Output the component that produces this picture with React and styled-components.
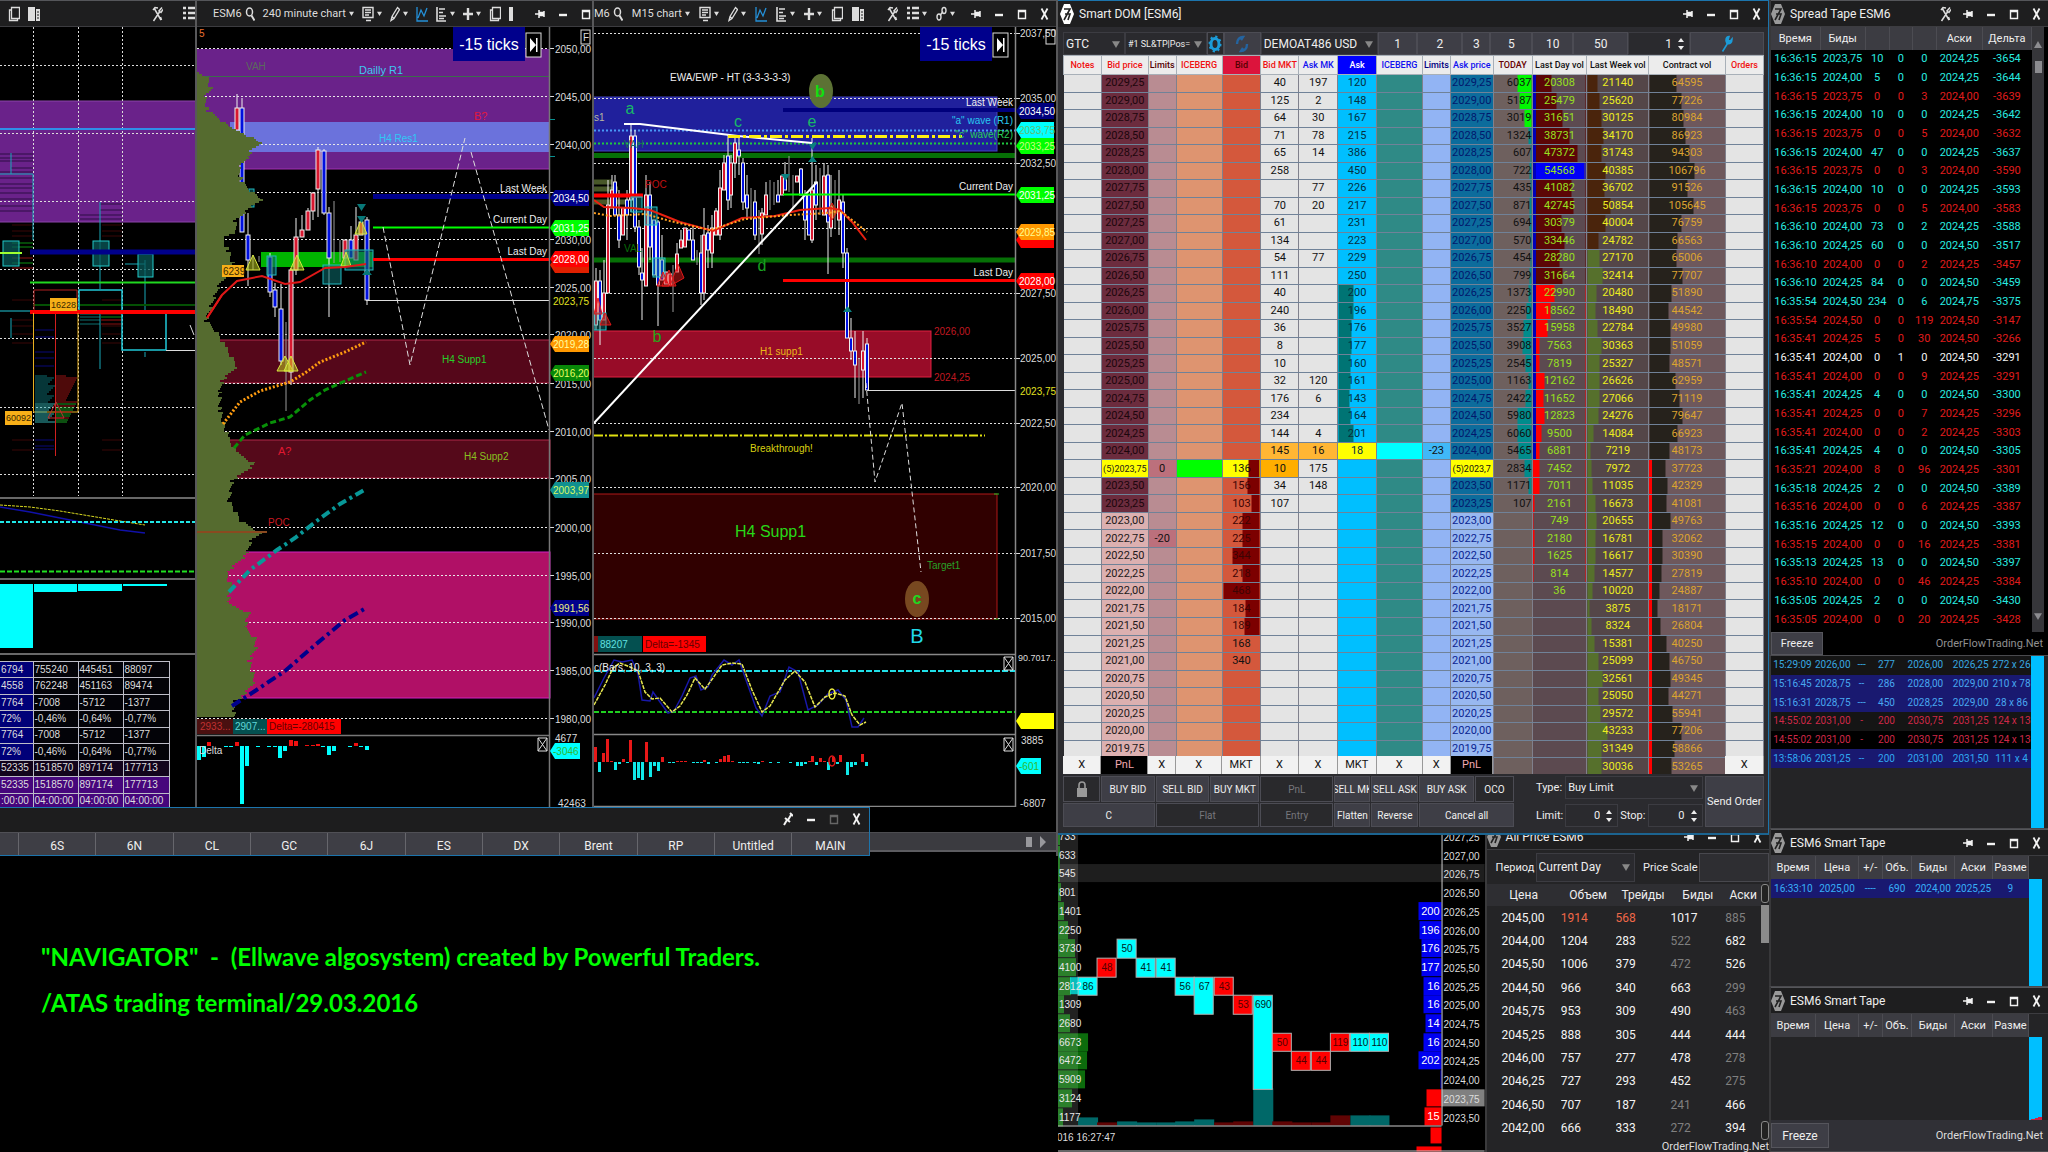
import { Fragment } from 'react';
import styled, { createGlobalStyle, css } from 'styled-components';

const GlobalStyle = createGlobalStyle`
  * {
    box-sizing: border-box;
  }
  body {
    margin: 0;
    background: #000;
    color: #eee;
    font-family: Roboto, "Liberation Sans", Arial, sans-serif;
    font-size: 11px;
  }
  button, input, select {
    font: inherit;
    color: inherit;
  }
  table {
    border-collapse: collapse;
    border-spacing: 0;
  }
  th, td {
    padding: 0;
    font-weight: normal;
    white-space: nowrap;
    overflow: hidden;
  }
`;

/* ---------- shell ---------- */

const Desktop = styled.div`
  display: grid;
  grid-template-columns: minmax(0, 1058fr) minmax(0, 711fr) minmax(0, 279fr);
  height: 100vh;
  overflow: hidden;
`;

const Column = styled.div`
  display: flex;
  flex-direction: column;
  min-width: 0;
  min-height: 0;
`;

const TitleBar = styled.header`
  display: flex;
  align-items: center;
  flex: none;
  height: 27px;
  gap: ${(p) => p.$gap || 5}px;
  padding-left: ${(p) => p.$pad || 0}px;
  background: #1e1e1f;
  border-top: 1px solid ${(p) => p.$line || '#55565a'};
  border-bottom: 1px solid #3c3c40;
  overflow: hidden;
  white-space: nowrap;
`;

const Title = styled.h2`
  margin: 0;
  font-size: 12px;
  font-weight: normal;
`;

const Spacer = styled.div`
  flex: 1;
`;

const WinButtons = styled.div`
  display: flex;
  flex: none;
`;

const WinButton = styled.button`
  display: flex;
  align-items: center;
  justify-content: center;
  width: 23px;
  height: 22px;
  padding: 0;
  border: 0;
  background: none;
  color: ${(p) => (p.$dim ? '#666' : '#f2f2f2')};
`;

const ToolButton = styled.button`
  display: flex;
  align-items: center;
  flex: none;
  gap: 3px;
  padding: 0;
  border: 0;
  background: none;
  color: ${(p) => p.$color || '#ddd'};
  font-size: 11px;
`;

const Divider = styled.span`
  width: 1px;
  height: 20px;
  background: #444;
`;

/* ---------- icons ---------- */

const ICONS = {
  pin: [10, 12, <path key="a" d="M0 6h4M4 2v8M4 6h4M4 4.500h4v3h-4M9 3v6" strokeWidth="1.500" />],
  pinUp: [10, 14, <path key="a" d="M1 13l3-5M2 6l5 4M5 8l3-5M7 1l3 3" strokeWidth="2" />],
  min: [12, 12, <path key="a" d="M2 7h8" strokeWidth="2.400" />],
  max: [12, 14, <path key="a" d="M2.500 3.500h7v8h-7zM2.500 4.500h7" strokeWidth="1.400" />],
  close: [10, 14, <path key="a" d="M1.500 1.500l6 11M7.500 1.500l-6 11" strokeWidth="1.800" />],
  search: [10, 16, <Fragment key="a"><ellipse cx="4.500" cy="6" rx="3" ry="4" strokeWidth="1.500" /><path d="M6.500 9.500l3 5" strokeWidth="2" /></Fragment>],
  monitor: [12, 16, <path key="a" d="M1 1.500h10v10h-10zM3 4h6M3 6.500h6M3 9h4M4 14.500h5" strokeWidth="1.400" />],
  pencil: [10, 16, <path key="a" d="M1 14.500l1-4 5.500-9 2 2-5.500 9zM2 10.500l2 2" strokeWidth="1.300" />],
  wave: [12, 16, <path key="a" d="M1 1v14h11M2 12l3-8 3 6 3-8" strokeWidth="1.300" />],
  levels: [11, 16, <path key="a" d="M1 1v14h9M3 3h6M3 6.500h4M3 10h7M3 12.500h5" strokeWidth="1.600" />],
  plus: [10, 14, <path key="a" d="M0 7h10M5 1v12" strokeWidth="2.400" />],
  copy: [12, 16, <path key="a" d="M3.500 1.500h8v11h-8zM3.500 4h-2v10.500h8v-2" strokeWidth="1.300" />],
  doc: [12, 16, <Fragment key="a"><path d="M0 1h7v14h-7zM8 3h4v12h-4z" fill="currentColor" stroke="none" /><path d="M9 6h2M9 9h2M9 12h2" stroke="#1e1e1f" /></Fragment>],
  docHalf: [4, 16, <path key="a" d="M0 1h4v14h-4z" fill="currentColor" stroke="none" />],
  tools: [11, 16, <path key="a" d="M2 2l7 12M1 4l2-2.500 3 .5M9.500 14l-1-3M10 1.500l-3 3.500 2 1.500 2-3M7.500 6l-6 9" strokeWidth="1.500" />],
  list: [12, 15, <path key="a" d="M0 2h3M5 2h7M0 7h3M5 7h7M0 12h3M5 12h7" strokeWidth="2.400" />],
  link: [11, 16, <Fragment key="a"><ellipse cx="8" cy="4.500" rx="2" ry="3" strokeWidth="1.400" /><ellipse cx="3" cy="11" rx="2" ry="3" strokeWidth="1.400" /><path d="M4 9.500l3-4" strokeWidth="1.400" /></Fragment>],
  gear: [14, 18, <Fragment key="a"><ellipse cx="7" cy="9" rx="4" ry="5.500" strokeWidth="3" /><ellipse cx="7" cy="9" rx="5.500" ry="7.500" strokeWidth="2" strokeDasharray="2.200 2.900" /></Fragment>],
  sync: [14, 18, <path key="a" d="M2 9c0-5 3-7 6-7l-2 3M12 9c0 5-3 7-6 7l2-3" strokeWidth="2.400" />],
  wrench: [12, 18, <path key="a" d="M1.500 16.500l5-8M11 4l-2 2.500-2-1.500 1-3.500c-3 0-4 4-2 7 3 1 5-1 5-4.500z" strokeWidth="1.600" fill="currentColor" />],
  lock: [12, 18, <Fragment key="a"><path d="M1 8h10v9h-10z" fill="currentColor" stroke="none" /><path d="M3 8v-3c0-4 6-4 6 0v3" strokeWidth="1.600" /></Fragment>],
};

function Icon({ name }) {
  const [w, h, shape] = ICONS[name];
  return (
    <svg width={w} height={h} viewBox={`0 0 ${w} ${h}`} fill="none" stroke="currentColor" aria-hidden="true">
      {shape}
    </svg>
  );
}

function Caret({ size = 5, color = '#ddd' }) {
  return (
    <svg width={size} height={size} viewBox="0 0 6 6" aria-hidden="true">
      <path d="M0 1h6l-3 5z" fill={color} />
    </svg>
  );
}

function Logo({ active }) {
  return (
    <svg width="14" height="20" viewBox="0 0 14 20" aria-hidden="true">
      <path d="M4 0h6l4 10-4 10h-6l-4-10z" fill={active ? '#fff' : '#9a9a9a'} />
      <path d="M4 5h6l-6 11M5 10h5l-2 6" fill="none" stroke="#222" strokeWidth="1.600" />
    </svg>
  );
}

function WindowControls({ pin = 'pin', dimMax }) {
  return (
    <WinButtons>
      <WinButton aria-label="Pin"><Icon name={pin} /></WinButton>
      <WinButton aria-label="Minimize"><Icon name="min" /></WinButton>
      <WinButton aria-label="Maximize" $dim={dimMax}><Icon name="max" /></WinButton>
      <WinButton aria-label="Close"><Icon name="close" /></WinButton>
    </WinButtons>
  );
}

/* ---------- chart primitives ---------- */

const Charts = styled.section`
  display: grid;
  grid-template-columns: minmax(0, 197fr) minmax(0, 397fr) minmax(0, 464fr);
  flex: none;
  height: 807px;
  overflow: hidden;
`;

const ChartWindow = styled.article`
  display: flex;
  flex-direction: column;
  min-width: 0;
  border-right: 2px solid #58585a;
  overflow: hidden;
`;

const Plot = styled.svg`
  display: block;
  flex: none;
  width: 100%;
  height: ${(p) => p.$h}px;
  font-family: "Liberation Sans", Arial, sans-serif;
  background: #000;
`;

const Label = styled.text`
  font-size: ${(p) => p.$size || 10}px;
  font-weight: ${(p) => (p.$bold ? 'bold' : 'normal')};
`;

const DOTS = '2 2';

function Candles({ data, w = 4 }) {
  return data.map(([x, kind, top, bottom, hi, lo], i) => {
    const fill = kind === 'r' ? '#d81830' : kind === 'b' ? '#0010e0' : 'none';
    return (
      <g key={i}>
        <path d={`M${x} ${hi ?? top}V${lo ?? bottom}`} stroke={kind === 'w' ? '#999' : '#eee'} />
        {kind !== 'w' && (
          <rect x={x - w / 2} y={top} width={w} height={bottom - top} fill={fill} stroke="#eee" strokeWidth="1" />
        )}
      </g>
    );
  });
}

function Tag({ x, y, w, fill, color = '#fff', children }) {
  return (
    <g>
      <path d={`M${x} ${y}l5 -8h${w - 5}v16h-${w - 5}z`} fill={fill} />
      <Label x={x + 3} y={y + 4} fill={color}>{children}</Label>
    </g>
  );
}

function Line({ pts, ...rest }) {
  return <polyline points={pts} fill="none" {...rest} />;
}

function CrossBox({ x, y }) {
  return <path d={`M${x} ${y}h9v13h-9zM${x} ${y}l9 13M${x + 9} ${y}l-9 13`} fill="none" stroke="#ddd" />;
}

function TicksBadge({ x }) {
  return (
    <g>
      <rect x={x} y="27" width="72" height="34" fill="#00008c" />
      <Label x={x + 36} y="50" textAnchor="middle" fill="#fff" $size={16}>-15 ticks</Label>
      <rect x={x + 73} y="33" width="15" height="24" fill="#000" stroke="#ddd" />
      <path d={`M${x + 77} 38v14l6 -7zM${x + 83} 38h1.500v14h-1.500z`} fill="#fff" />
    </g>
  );
}

/* ---------- footprint chart ---------- */

const PROFILE_A = Array.from({ length: 24 }, (_, i) => ({
  y: 376 + i * 2,
  l: 12 + ((i * 7) % 9),
  r: 10 + ((i * 11) % 12),
}));

const StatsTable = styled.table`
  width: 169px;
  height: 148px;
  flex: none;
  margin-top: 6px;
  table-layout: fixed;
  font-family: "Liberation Sans", Arial, sans-serif;
  font-size: 10px;
  line-height: 14px;
  td {
    border: 1px solid #bdbdc8;
    padding: 0 1px;
    background: #030308;
    color: #ddd;
  }
  td:first-child {
    background: #000078;
    border-left: 0;
  }
  tr:nth-child(7) td {
    background: #12041c;
  }
  tr:nth-child(n + 8) td {
    background: #46067c;
    border-bottom: 0;
  }
`;

const STATS = [
  ['6794', '755240', '445451', '88097'],
  ['4558', '762248', '451163', '89474'],
  ['7764', '-7008', '-5712', '-1377'],
  ['72%', '-0,46%', '-0,64%', '-0,77%'],
  ['7764', '-7008', '-5712', '-1377'],
  ['72%', '-0,46%', '-0,64%', '-0,77%'],
  ['52335', '1518570', '897174', '177713'],
  ['52335', '1518570', '897174', '177713'],
  [':00:00', '04:00:00', '04:00:00', '04:00:00'],
];

function ClusterChart() {
  return (
    <ChartWindow>
      <TitleBar $pad={8} $gap={8}>
        <ToolButton aria-label="Copy"><Icon name="copy" /></ToolButton>
        <ToolButton aria-label="Panel"><Icon name="doc" /></ToolButton>
        <Spacer />
        <ToolButton aria-label="Tools"><Icon name="tools" /></ToolButton>
        <Spacer style={{ flex: '0 0 4px' }} />
        <ToolButton aria-label="List"><Icon name="list" /></ToolButton>
      </TitleBar>
      <Plot $h={628} viewBox="0 27 195 628" preserveAspectRatio="xMinYMin slice">
        <rect x="-1" y="101" width="200" height="121" fill="#6a228a" stroke="#8a45a8" />
        {[65, 133, 201, 269, 338, 407, 474].map((y) => (
          <path key={y} d={`M0 ${y}.5H195`} stroke="#ddd" strokeDasharray={DOTS} />
        ))}
        {[33, 78, 122].map((x) => (
          <path key={x} d={`M${x}.5 27V496`} stroke="#ddd" strokeDasharray={DOTS} />
        ))}
        {[154, 158, 161, 168, 172, 178, 184, 188, 193, 199, 206, 211].map((y) => (
          <path key={y} d={`M${y % 3 ? 0 : 11} ${y}H33`} stroke="#2c0c44" />
        ))}
        {[204, 210, 215, 219].map((y) => (
          <path key={y} d={`M${y % 2 ? 80 : 100} ${y}H122`} stroke="#2c0c44" />
        ))}
        {[225, 231, 236, 300, 320, 326, 334, 343, 440, 450].map((y) => (
          <path key={y} d={`M102 ${y}H122M12 ${y}H33`} stroke="#3a0606" />
        ))}
        {[330, 337, 352, 358, 366, 440, 446, 449].map((y) => (
          <path key={y} d={`M35 ${y}H54`} stroke="#04043c" strokeWidth="2" />
        ))}
        {[243, 247, 258, 263, 268].map((y) => (
          <path key={y} d={`M12 ${y}H33`} stroke={y % 2 ? '#0a9010' : '#8c1010'} />
        ))}
        {[314, 317, 320, 324].map((y) => (
          <g key={y}>
            <path d={`M80 ${y}H100`} stroke="#0c7070" />
            <path d={`M101 ${y}H122`} stroke={y % 2 ? '#0a9010' : '#8c1010'} />
          </g>
        ))}
        <path d="M0 129H195" stroke="#2f8fe8" strokeWidth="2" />
        <path d="M11 153V174M0 174H33M33 174V240M11 318V338M100 202V289M100 310V369M145 260V311M125 264H145M145 352V357" stroke="#18a8b8" fill="none" />
        <g fill="#0a5a5a" stroke="#20c8c8" fillOpacity=".75">
          <rect x="3" y="241" width="16" height="25" />
          <rect x="93" y="241" width="16" height="25" />
          <rect x="138" y="254" width="15" height="23" />
        </g>
        <path d="M0 253H22" stroke="#a0ff30" strokeWidth="2" />
        <path d="M30 252H195" stroke="#00008c" strokeWidth="5" />
        <path d="M30 282.500H195" stroke="#20d820" strokeWidth="2" />
        <path d="M33 305H195" stroke="#045004" strokeWidth="2" />
        <path d="M34 290H77V311M34 290V312" stroke="#b02020" fill="none" />
        <path d="M79 310V290H122V350H166V313" stroke="#20c8d8" fill="none" strokeWidth="1.500" />
        <path d="M0 311H30" stroke="#20c8d8" />
        <path d="M30 312H195" stroke="#f00" strokeWidth="4" />
        <path d="M166 350.500H195" stroke="#ddd" />
        <path d="M33.500 313V412H78V313" stroke="#e8b020" fill="none" />
        {PROFILE_A.map((b, i) => (
          <g key={b.y}>
            <path d={`M35 ${b.y}h${b.l}`} stroke={i > 13 ? '#30b0b0' : '#0c6c70'} />
            <path d={`M56 ${b.y}h${b.r}`} stroke={i > 13 && i % 3 ? '#18a020' : '#9c1414'} />
          </g>
        ))}
        <path d="M55.500 314V456" stroke="#d02020" />
        <path d="M48 418l8-16 8 16z" fill="none" stroke="#c03030" />
        <rect x="50" y="298" width="27" height="13" fill="#f8b018" />
        <Label x="51" y="308" fill="#3a2800" $size={9}>16228</Label>
        <rect x="5" y="411" width="27" height="14" fill="#f8b018" />
        <Label x="6" y="421" fill="#3a2800" $size={9}>60092</Label>
        <path d="M190 325l4 10" stroke="#ddd" />
        <path d="M0 498H195M0 579H195M0 654H195" stroke="#8a8a8a" strokeWidth="1.500" />
        <Line pts="0,505 30,507 60,511 90,516 120,521 145,525" stroke="#d8d820" strokeDasharray="3 1" />
        <Line pts="0,507 30,512 60,518 90,524 120,530 145,533" stroke="#1010a8" strokeWidth="1.500" />
        <path d="M0 522H195" stroke="#20e8e8" strokeWidth="2" strokeDasharray="4 2" />
        <path d="M0 571.500H195" stroke="#20e020" strokeWidth="2" strokeDasharray="5 2" />
        <g fill="#0ff">
          <rect x="0" y="584" width="33" height="64" />
          <rect x="34" y="584" width="43" height="8" />
          <rect x="78" y="584" width="44" height="7" />
          <rect x="123" y="584" width="44" height="2" />
        </g>
      </Plot>
      <StatsTable>
        <colgroup>
          <col width="33" />
          <col width="45" />
          <col width="45" />
          <col width="46" />
        </colgroup>
        <tbody>
          {STATS.map((row, i) => (
            <tr key={i}>
              {row.map((v, j) => <td key={j}>{v}</td>)}
            </tr>
          ))}
        </tbody>
      </StatsTable>
    </ChartWindow>
  );
}

/* ---------- H4 chart ---------- */

const PROFILE_B = [
  [72, 197], [77, 207], [87, 211], [97, 205], [110, 208], [118, 220], [127, 230], [133, 245], [142, 260],
  [150, 251], [157, 247], [167, 239], [180, 241], [190, 251], [199, 262], [208, 249], [220, 235], [230, 237],
  [237, 222], [250, 228], [263, 233], [283, 220], [297, 214], [320, 206], [330, 216], [347, 226], [365, 237],
  [380, 222], [393, 220], [410, 220], [437, 228], [452, 237], [463, 255], [475, 239], [480, 232], [500, 229],
  [520, 241], [532, 260], [540, 251], [553, 247], [572, 226], [587, 232], [602, 227], [612, 249], [627, 245],
  [637, 255], [647, 256], [660, 249], [680, 255], [695, 243], [700, 235], [717, 234],
];

// stepped silhouette of the volume profile, one level every two pixels
function profilePath(points) {
  let d = `M197 ${points[0][0]}`;
  for (let i = 0; i < points.length - 1; i++) {
    const [y0, x0] = points[i];
    const [y1, x1] = points[i + 1];
    for (let y = y0; y < y1; y += 2) {
      const t = (y - y0) / (y1 - y0);
      const jag = ((y * 7) % 5) - 2;
      d += `H${Math.max(198, Math.round(x0 + (x1 - x0) * t + jag))}V${Math.min(y + 2, y1)}`;
    }
  }
  return `${d}H197Z`;
}

const CANDLES_B = [
  [237, 'r', 108, 130, 94], [242, 'b', 108, 134, 98], [242, 'b', 159, 232], [248, 'b', 235, 260, 213, 286],
  [253, 'w', 255, 270], [259, 'w', 256, 262], [270, 'b', 257, 292, 253, 297], [275, 'b', 290, 307, 283, 317],
  [281, 'b', 309, 361, 284, 365], [286, 'w', 322, 411], [291, 'r', 270, 372, 268, 385], [296, 'r', 237, 270, 218, 275],
  [302, 'r', 230, 237, 215], [308, 'r', 211, 230, 208], [313, 'r', 193, 211, 192, 220], [318, 'r', 150, 189, 147, 217],
  [324, 'b', 151, 213, 149, 215], [329, 'b', 213, 258, 207, 317], [334, 'w', 201, 263], [340, 'w', 240, 262],
  [345, 'r', 240, 258], [351, 'b', 240, 258, 226], [356, 'r', 235, 260, 207], [361, 'r', 222, 235], [367, 'b', 220, 300, 217, 305],
];

// the 2035 level is a grid line only, its label gives way to the 2034,50 tag
const PRICES_B = [
  ['2050,00', 48], ['2045,00', 96], ['2040,00', 144], ['', 192], ['2030,00', 239], ['2025,00', 287], ['2020,00', 334],
  ['2015,00', 383], ['2010,00', 431], ['2005,00', 478], ['2000,00', 527], ['1995,00', 575], ['1990,00', 622],
  ['1985,00', 670], ['1980,00', 718],
];

const DELTA_B = [
  [197, 14], [202, 11], [207, -4], [224, 1], [229, 1], [235, -4], [240, 58], [245, 20], [256, 1], [267, 1], [273, 1],
  [278, 12], [283, 5], [289, -6], [294, -5], [305, -1], [311, -1], [316, -2], [321, 1], [327, 9], [332, 5], [348, 1],
  [354, -3], [359, 1], [365, 4],
];

function HourChart() {
  return (
    <ChartWindow>
      <TitleBar $gap={8}>
        <Logo />
        <Divider />
        <ToolButton>ESM6 <Icon name="search" /></ToolButton>
        <ToolButton>240 minute chart<Caret /></ToolButton>
        <ToolButton aria-label="Template"><Icon name="monitor" /><Caret /></ToolButton>
        <ToolButton aria-label="Draw"><Icon name="pencil" /><Caret /></ToolButton>
        <ToolButton aria-label="Indicators" $color="#2490d8"><Icon name="wave" /></ToolButton>
        <ToolButton aria-label="Levels"><Icon name="levels" /><Caret /></ToolButton>
        <ToolButton aria-label="Add"><Icon name="plus" /><Caret /></ToolButton>
        <ToolButton aria-label="Copy"><Icon name="copy" /></ToolButton>
        <ToolButton aria-label="Panel"><Icon name="docHalf" /></ToolButton>
        <Spacer />
        <WindowControls />
      </TitleBar>
      <Plot $h={780} viewBox="197 27 395 780" preserveAspectRatio="xMinYMin slice">
        <rect x="197" y="49" width="352" height="120" fill="#6a228a" />
        <rect x="230" y="122" width="319" height="30" fill="#6b72dc" />
        <rect x="210" y="340" width="340" height="43" fill="#55071a" stroke="#b02848" />
        <rect x="210" y="440" width="340" height="38" fill="#55091a" stroke="#b02848" />
        <rect x="210" y="552" width="340" height="146" fill="#b01066" stroke="#d020c0" />
        <path d="M197 76.500H549" stroke="#3c6c4c" />
        <path d="M197 169H549" stroke="#a030b0" />
        {PRICES_B.map(([p, y]) => (
          <g key={y}>
            <path d={`M197 ${y}.5H549`} stroke="#e8e8e8" strokeDasharray={DOTS} />
            <path d={`M549 ${y}.5h5`} stroke="#ddd" />
            {p && <Label x="555" y={y + 5} fill="#ddd">{p}</Label>}
          </g>
        ))}
        <rect x="261" y="252" width="112" height="15" fill="#00b400" />
        <Candles data={CANDLES_B} />
        <g fill="#0a6868" fillOpacity=".6" stroke="#20b8c0">
          <rect x="267" y="256" width="9" height="19" />
          <rect x="323" y="265" width="18" height="19" />
          <rect x="345" y="250" width="28" height="20" />
          <rect x="249" y="189" width="5" height="18" />
        </g>
        <g fill="#c8d820" fillOpacity=".5" stroke="#d8e840">
          <path d="M246 270l7-15 7 15z" />
          <path d="M290 270l7-15 7 15z" />
          <path d="M277 371l8-15 8 15z" />
          <path d="M284 371l7-15 7 15z" />
          <path d="M355 234l6-14 6 14z" />
          <path d="M341 266l5-14 5 14z" />
        </g>
        <path d="M357 204h9l-4.500 7zM357 216h9l-4.500 7zM362 275l5-6 5 6z" fill="#087878" />
        <Line pts="207,318 222,295 237,281 262,276 285,284 300,282 325,268 345,267 366,264" stroke="#e01818" strokeWidth="2" />
        <path d={profilePath(PROFILE_B)} fill="#556b2f" />
        <path d="M207 318l15 -23" stroke="#e01818" strokeWidth="2" />
        <rect x="222" y="265" width="22" height="12" fill="#f8b018" />
        <Label x="223" y="275" fill="#3a2800">6239</Label>
        <path d="M197 532H267" stroke="#8a4a20" strokeWidth="2" />
        <Line pts="223,424 240,402 260,391 290,382 305,373 320,362 345,352 366,342" stroke="#ff9c10" strokeWidth="3" strokeDasharray="2 2" />
        <Line pts="234,448 245,435 270,423 290,417 310,400 325,390 345,381 366,372" stroke="#089008" strokeWidth="3" strokeDasharray="6 3" />
        <Line pts="229,592 250,570 277,550 295,538 318,520 340,504 366,489" stroke="#089898" strokeWidth="4" strokeDasharray="9 4 3 4" />
        <Line pts="232,706 255,691 285,671 315,645 345,620 366,608" stroke="#00008c" strokeWidth="4" strokeDasharray="10 4 3 4" />
        <path d="M373 196.500H549" stroke="#00008c" strokeWidth="5" />
        <path d="M373 227.500H549" stroke="#0f0" strokeWidth="2" />
        <path d="M373 259.500H549" stroke="#f00" strokeWidth="3" />
        <path d="M366 300.500H549" stroke="#ddd" />
        <Line pts="383,227 410,365 465,138" stroke="#ddd" strokeDasharray="6 3" />
        <Line pts="471,152 510,290 549,430" stroke="#ddd" strokeDasharray="6 3" />
        <rect x="196" y="719" width="37" height="15" fill="#4a1010" />
        <rect x="233" y="719" width="34" height="15" fill="#045050" />
        <rect x="267" y="719" width="74" height="15" fill="#f00" />
        <Label x="200" y="730" fill="#c03030">2933...</Label>
        <Label x="235" y="730" fill="#60d8d8">2907...</Label>
        <Label x="269" y="730" fill="#600">Delta=-280415</Label>
        <path d="M549.500 27V807M197 735.500H549" stroke="#777" strokeWidth="1.500" />
        {DELTA_B.map(([x, h]) => (
          <rect key={x} x={x} y={h > 0 ? 746 : 746 + h} width="4" height={Math.abs(h)} fill={h > 0 ? '#0ff' : '#f01010'} />
        ))}
        <Label x="199" y="754" fill="#ddd">Delta</Label>
        <CrossBox x={538} y={738} />
        <Label x="199" y="37" fill="#e87030">5</Label>
        <Label x="246" y="70" fill="#5a6a5c">VAH</Label>
        <Label x="359" y="74" fill="#40c8f0" $size={11}>Dailly R1</Label>
        <Label x="379" y="142" fill="#30c8f4">H4 Res1</Label>
        <Label x="474" y="120" fill="#e01840" $size={11}>B?</Label>
        <Label x="547" y="192" fill="#eee" textAnchor="end">Last Week</Label>
        <Label x="547" y="223" fill="#eee" textAnchor="end">Current Day</Label>
        <Label x="547" y="255" fill="#eee" textAnchor="end">Last Day</Label>
        <Label x="442" y="363" fill="#28d028">H4 Supp1</Label>
        <Label x="464" y="460" fill="#88c020">H4 Supp2</Label>
        <Label x="278" y="455" fill="#e01830" $size={11}>A?</Label>
        <Label x="268" y="526" fill="#c81820">POC</Label>
        <TicksBadge x={453} />
        <rect x="581" y="30" width="9" height="14" fill="#000" stroke="#ddd" />
        <Label x="583" y="41" fill="#ddd">F</Label>
        <path d="M550 119.500h5M550 156.500h5" stroke="#0a9090" />
        <Tag x={550} y={198} w={39} fill="#00008c">2034,50</Tag>
        <Tag x={550} y={228} w={39} fill="#0f0">2031,25</Tag>
        <path d="M550 265l5-8h34v16h-34z" fill="#e02000" />
        <Tag x={550} y={259} w={39} fill="#f00">2028,00</Tag>
        <Label x="553" y="305" fill="#e0e020">2023,75</Label>
        <Tag x={550} y={344} w={39} fill="#ff9800" color="#ffffa0">2019,28</Tag>
        <Tag x={550} y={373} w={39} fill="#088808" color="#e8ff60">2016,20</Tag>
        <Tag x={550} y={490} w={39} fill="#109090" color="#d8f860">2003,97</Tag>
        <Tag x={550} y={608} w={39} fill="#00008c" color="#f0f080">1991,56</Tag>
        <Label x="555" y="742" fill="#ddd">4677</Label>
        <Tag x={550} y={751} w={30} fill="#0ff" color="#30b830">-3046</Tag>
        <Label x="558" y="807" fill="#ddd">42463</Label>
      </Plot>
    </ChartWindow>
  );
}

/* ---------- M15 chart ---------- */

const CANDLES_C = [
  [596, 'r', 281, 325, 268, 330], [600, 'b', 281, 320, 270, 345], [604, 'r', 293, 320, 260], [608, 'r', 205, 293, 180],
  [612, 'r', 190, 208, 175], [615, 'b', 182, 215, 175], [619, 'b', 215, 240, 190, 248], [623, 'r', 208, 235],
  [627, 'b', 200, 215, 190, 240], [631, 'r', 136, 200, 125, 212], [635, 'b', 136, 227, 130, 232], [639, 'b', 227, 267, 220, 275],
  [642, 'b', 273, 280, 248, 320], [646, 'r', 195, 286, 175], [650, 'b', 195, 247, 182, 260], [654, 'b', 220, 275],
  [658, 'b', 222, 285, 220, 326], [662, 'b', 260, 280, 235], [666, 'r', 272, 284], [670, 'r', 274, 285], [673, 'w', 265, 312],
  [677, 'r', 254, 272, 243], [681, 'r', 240, 248, 230], [685, 'r', 228, 247], [689, 'b', 230, 240], [693, 'b', 240, 260, 225],
  [697, 'w', 250, 265], [701, 'b', 253, 293, 235, 305], [704, 'r', 235, 293, 208, 300], [708, 'b', 233, 250, 225, 268],
  [712, 'r', 228, 253, 215, 268], [716, 'r', 211, 235, 208], [720, 'r', 188, 235, 170, 240], [724, 'r', 163, 190, 155],
  [728, 'b', 156, 200, 135, 210], [731, 'r', 163, 195, 155, 208], [735, 'r', 143, 163, 138, 178], [739, 'b', 150, 156, 136, 175],
  [743, 'b', 163, 202, 158, 210], [747, 'b', 195, 208, 175, 220], [751, 'w', 188, 220], [755, 'b', 202, 235, 190, 240],
  [759, 'w', 210, 254], [762, 'r', 213, 234, 208, 245], [766, 'r', 195, 215, 182], [770, 'w', 180, 210], [774, 'w', 182, 205],
  [778, 'b', 195, 202, 180], [782, 'r', 176, 195], [785, 'b', 176, 190, 162], [789, 'w', 156, 192], [793, 'w', 175, 208],
  [797, 'r', 176, 182], [801, 'b', 169, 195, 168], [805, 'b', 195, 220, 190, 240], [809, 'b', 195, 235], [812, 'r', 190, 240, 138, 243],
  [816, 'b', 182, 205, 165, 220], [820, 'w', 168, 215], [824, 'r', 176, 215, 163], [828, 'b', 175, 222, 165, 274],
  [831, 'r', 207, 228, 175, 237], [835, 'w', 180, 228], [839, 'r', 200, 220, 170, 235], [843, 'b', 202, 253, 195, 268],
  [847, 'b', 253, 338, 248], [851, 'b', 338, 351, 318, 360], [855, 'b', 351, 365, 331, 398], [859, 'w', 358, 404],
  [863, 'r', 351, 370, 331, 398], [867, 'b', 344, 390, 338],
];

// 2030 carries no label of its own, the 2029,85 tag covers its place
const PRICES_C = [
  ['2037,50', 33], ['2035,00', 98], ['2032,50', 163], ['', 228], ['2027,50', 293], ['2025,00', 358],
  ['2022,50', 423], ['2020,00', 487], ['2017,50', 553], ['2015,00', 618],
];

const DELTA_C = [
  [594, -15], [598, 10], [602, -9], [606, -23], [610, -1], [614, 8], [618, 2], [622, -3], [626, 1], [629, -22], [633, 18],
  [637, 16], [641, 18], [645, -20], [649, 15], [653, 4], [657, 9], [661, -5], [668, 1], [672, 1], [676, -1], [680, -1],
  [684, -1], [692, 1], [696, 1], [700, 1], [703, -2], [707, 2], [715, 1], [719, -3], [723, -6], [727, -7], [731, -1],
  [738, 1], [742, 1], [746, 1], [753, 1], [757, 2], [761, -1], [769, 1], [777, 1], [789, 1], [796, 4], [800, 4], [804, 2],
  [808, -1], [811, -6], [815, 3], [819, -4], [823, -1], [827, 8], [832, -5], [836, 2], [839, -7], [846, 13], [850, 5],
  [854, 3], [861, -8], [865, 4],
];

const STOCH = '594,705 605,685 613,668 620,663 630,667 638,671 645,692 652,699 660,698 672,712 680,706 687,695 695,678 705,689 713,678 722,665 732,663 742,664 752,690 762,712 770,706 785,680 795,671 805,682 815,707 825,697 835,693 845,696 852,715 860,725 866,722';
const STOCH_FAST = '594,698 604,678 614,660 622,662 632,660 638,674 642,700 650,701 653,692 660,702 668,713 674,711 682,696 690,678 696,676 701,690 708,687 712,675 724,660 732,665 739,660 746,680 756,708 762,716 770,696 780,692 789,667 798,672 808,710 818,705 828,694 838,690 846,700 852,727 858,727 864,718';

function MinuteChart() {
  return (
    <ChartWindow>
      <TitleBar $gap={9}>
        <ToolButton>M6 <Icon name="search" /></ToolButton>
        <ToolButton>M15 chart<Caret /></ToolButton>
        <ToolButton aria-label="Template"><Icon name="monitor" /><Caret /></ToolButton>
        <ToolButton aria-label="Draw"><Icon name="pencil" /><Caret /></ToolButton>
        <ToolButton aria-label="Indicators" $color="#2490d8"><Icon name="wave" /></ToolButton>
        <ToolButton aria-label="Levels"><Icon name="levels" /><Caret /></ToolButton>
        <ToolButton aria-label="Add"><Icon name="plus" /><Caret /></ToolButton>
        <ToolButton aria-label="Copy"><Icon name="copy" /></ToolButton>
        <ToolButton aria-label="Panel"><Icon name="doc" /></ToolButton>
        <Spacer />
        <ToolButton aria-label="Tools"><Icon name="tools" /></ToolButton>
        <ToolButton aria-label="List"><Icon name="list" /><Caret /></ToolButton>
        <ToolButton aria-label="Link"><Icon name="link" /><Caret /></ToolButton>
        <WindowControls />
      </TitleBar>
      <Plot $h={780} viewBox="594 27 462 780" preserveAspectRatio="xMinYMin slice">
        <rect x="590" y="97" width="407" height="54" fill="#20209c" stroke="#4444c0" />
        <rect x="590" y="331" width="341" height="46" fill="#980c28" stroke="#e02040" />
        <rect x="590" y="494" width="407" height="125" fill="#300000" stroke="#b01818" />
        <path d="M994 494h5M994 619h5" stroke="#20c020" />
        {PRICES_C.map(([p, y]) => (
          <g key={y}>
            <path d={`M594 ${y}.5H1015`} stroke="#e0e0e0" strokeDasharray={DOTS} />
            <path d={`M1015 ${y}.5h5`} stroke="#ddd" />
            {p && <Label x="1020" y={y + 4} fill="#ddd">{p}</Label>}
          </g>
        ))}
        <path d="M594 130.500H1015" stroke="#4898f8" strokeWidth="2" strokeDasharray={DOTS} />
        <path d="M594 143.500H1015" stroke="#20c840" strokeWidth="2" strokeDasharray={DOTS} />
        <path d="M594 155.500H1015M594 260H1015" stroke="#067006" strokeWidth="5" />
        <path d="M594 182h18M594 189h24M594 202h34" stroke="#485828" strokeWidth="5" />
        <Candles data={CANDLES_C} w={3} />
        <path d="M594 195.500H643" stroke="#f00" strokeWidth="4" />
        <g fill="#109090" fillOpacity=".4" stroke="#20c0c8">
          <rect x="631" y="197" width="11" height="15" />
          <rect x="645" y="207" width="12" height="18" />
          <rect x="653" y="258" width="12" height="19" />
          <rect x="594" y="313" width="12" height="17" />
        </g>
        <g fill="#e01818" fillOpacity=".5" stroke="#e01818">
          <path d="M657 286l6-14 6 14zM662 286l7-16 7 16zM670 286l8-22 6 14zM594 314l4-16 4 16zM600 325l5-12 6 12z" />
          <path d="M827 212l5-9 5 9-5 8z" fill="#ff8010" />
        </g>
        <path d="M808 143h9l-4.500 7zM781 174h9l-4.500 7zM808 162h9l-4.500-6zM843 312h9l-4.500-6z" fill="#0a8080" />
        <Line pts="594,200 604,207 632,208 650,210 680,222 713,231 742,218 775,216 800,210 830,208 840,210 852,222 866,240" stroke="#e82010" strokeWidth="2" />
        <Line pts="594,213 610,216 645,214 670,221 710,230 745,219 790,215 828,213 840,211 852,220 867,232" stroke="#ffa020" strokeWidth="2" strokeDasharray="2 2" />
        <Line pts="624,124 640,124 738,136 812,143" stroke="#fff" strokeWidth="2" />
        <Line pts="594,423 817,182" stroke="#fff" strokeWidth="2" />
        <path d="M728 136.500H962" stroke="#fff010" strokeWidth="3" strokeDasharray="12 3 3 3" />
        <path d="M783 110H1015" stroke="#00007c" strokeWidth="4" />
        <path d="M783 194.500H1015" stroke="#0f0" strokeWidth="2" />
        <path d="M783 280.500H1015" stroke="#f00" strokeWidth="3" />
        <path d="M867 390.500H1015" stroke="#ddd" />
        <path d="M594 435.500H985" stroke="#e0e010" strokeWidth="2" strokeDasharray="9 2 2 2" />
        <Line pts="866,383 875,482 902,403 921,572" stroke="#ddd" strokeDasharray="5 3" />
        <ellipse cx="821" cy="91" rx="12" ry="17" fill="#5c7234" />
        <ellipse cx="917" cy="599" rx="12" ry="18" fill="#784820" />
        <Label x="820" y="97" textAnchor="middle" fill="#10e010" $size={16} $bold>b</Label>
        <Label x="917" y="604" textAnchor="middle" fill="#20d820" $size={16} $bold>c</Label>
        <Label x="917" y="643" textAnchor="middle" fill="#20d8e8" $size={20}>B</Label>
        <Label x="670" y="81" fill="#eee">EWA/EWP - HT (3-3-3-3-3)</Label>
        <Label x="594" y="121" fill="#b8b8a0">s1</Label>
        <Label x="630" y="114" textAnchor="middle" fill="#18b868" $size={16}>a</Label>
        <Label x="738" y="127" textAnchor="middle" fill="#18b868" $size={16}>c</Label>
        <Label x="812" y="127" textAnchor="middle" fill="#18b868" $size={16}>e</Label>
        <Label x="762" y="271" textAnchor="middle" fill="#18a020" $size={16}>d</Label>
        <Label x="657" y="342" textAnchor="middle" fill="#28a818" $size={16}>b</Label>
        <Label x="624" y="148" fill="#186860">VAH</Label>
        <Label x="624" y="252" fill="#087008">VAL</Label>
        <Label x="645" y="188" fill="#c01010">POC</Label>
        <Label x="1013" y="106" fill="#eee" textAnchor="end">Last Week</Label>
        <Label x="1013" y="124" fill="#28c8f0" textAnchor="end">"a" wave (R1)</Label>
        <Label x="1013" y="138" fill="#28d058" textAnchor="end">"c" wave(R2)</Label>
        <Label x="1013" y="190" fill="#eee" textAnchor="end">Current Day</Label>
        <Label x="1013" y="276" fill="#eee" textAnchor="end">Last Day</Label>
        <Label x="760" y="355" fill="#e8b818">H1 supp1</Label>
        <Label x="934" y="335" fill="#c01820">2026,00</Label>
        <Label x="934" y="381" fill="#c01820">2024,25</Label>
        <Label x="750" y="452" fill="#d8d010">Breakthrough!</Label>
        <Label x="735" y="537" fill="#28d818" $size={16}>H4 Supp1</Label>
        <Label x="927" y="569" fill="#28a028">Target1</Label>
        <rect x="590" y="636" width="8" height="16" fill="#801010" />
        <rect x="598" y="636" width="44" height="16" fill="#045050" />
        <rect x="643" y="636" width="63" height="16" fill="#f00" />
        <Label x="600" y="648" fill="#60e0e0">88207</Label>
        <Label x="645" y="648" fill="#600">Delta=-1345</Label>
        <path d="M1015.500 27V807M594 654.500H1015M594 734.500H1015M594 806.500H1015" stroke="#888" strokeWidth="1.500" />
        <path d="M594 671H1015" stroke="#20e0e8" strokeWidth="2" strokeDasharray="6 2" />
        <path d="M594 712H1015" stroke="#20d020" strokeWidth="2" strokeDasharray="5 2" />
        <Line pts={STOCH_FAST} stroke="#1818a8" strokeWidth="1.500" />
        <Line pts={STOCH} stroke="#e8e850" strokeWidth="1.500" strokeDasharray="4 1" />
        <ellipse cx="832" cy="694" rx="3" ry="5" fill="none" stroke="#f0f040" strokeWidth="1.500" />
        <Label x="594" y="671" fill="#eee">c(Bars, 10, 3, 3)</Label>
        {DELTA_C.map(([x, h]) => (
          <rect key={x} x={x} y={h > 0 ? 762 : 762 + h} width="3" height={Math.abs(h)} fill={h > 0 ? '#10e8e8' : '#e81818'} />
        ))}
        <ellipse cx="832" cy="761" rx="3" ry="5" fill="none" stroke="#e01818" strokeWidth="1.500" />
        <CrossBox x={1004} y={657} />
        <CrossBox x={1004} y={738} />
        <TicksBadge x={920} />
        <rect x="1046" y="30" width="9" height="14" fill="none" stroke="#ddd" />
        <Tag x={1016} y={111} w={38} fill="#00007c">2034,50</Tag>
        <Tag x={1016} y={146} w={38} fill="#0f0" color="#c8ff80">2033,25</Tag>
        <Tag x={1016} y={130} w={38} fill="#0ff" color="#60c070">2033,75</Tag>
        <Tag x={1016} y={195} w={38} fill="#0f0">2031,25</Tag>
        <path d="M1016 240l5-8h33v16h-33z" fill="#f00" />
        <Tag x={1016} y={232} w={38} fill="#ff9800" color="#ffff90">2029,85</Tag>
        <Tag x={1016} y={281} w={38} fill="#f00">2028,00</Tag>
        <Label x="1020" y="395" fill="#e0e020">2023,75</Label>
        <Label x="1018" y="661" fill="#ddd" $size={9}>90.7017..</Label>
        <Tag x={1016} y={721} w={38} fill="#ff0" />
        <Label x="1021" y="744" fill="#ddd">3885</Label>
        <Tag x={1016} y={766} w={25} fill="#0ff" color="#30b830">-601</Tag>
        <Label x="1020" y="807" fill="#ddd">-6807</Label>
      </Plot>
    </ChartWindow>
  );
}

/* ---------- workspace tabs ---------- */

const TabRow = styled.div`
  display: flex;
  flex: none;
  height: 49px;
`;

const TabWindow = styled.nav`
  display: flex;
  flex-direction: column;
  flex: 871 1 0;
  min-width: 0;
  border: 1px solid #1c74ac;
  border-left: 0;
`;

const TabTitle = styled.div`
  display: flex;
  justify-content: flex-end;
  height: 24px;
  background: #1d1d1e;
`;

const Tabs = styled.div`
  display: flex;
  flex: 1;
  padding-left: 18px;
  background: #3e3e45;
  border-top: 1px solid #505056;
`;

const Tab = styled.button`
  flex: 1;
  border: 0;
  border-left: 1px solid #66666c;
  background: none;
  padding: 4px 0 0;
  font-size: 12px;
`;

const HScroll = styled.div`
  flex: 187 1 0;
  display: flex;
  align-items: flex-end;
  border-right: 2px solid #58585a;
`;

const HScrollTrack = styled.div`
  display: flex;
  align-items: center;
  justify-content: flex-end;
  flex: 1;
  height: 20px;
  margin-bottom: 4px;
  padding-right: 10px;
  background: #3b3b40;
  border-bottom: 2px solid #5c5c60;
  border-top: 1px solid #4c4c50;
`;

const TABS = ['6S', '6N', 'CL', 'GC', '6J', 'ES', 'DX', 'Brent', 'RP', 'Untitled', 'MAIN'];

const Note = styled.p`
  margin: 0;
  padding: 78px 41px;
  color: #0f0;
  font-family: Lato, "Liberation Sans", sans-serif;
  font-weight: bold;
  font-size: 24px;
  line-height: 46px;
  white-space: pre-wrap;
`;

/* ---------- smart DOM ---------- */

const DomWindow = styled.section`
  display: flex;
  flex-direction: column;
  flex: none;
  height: 835px;
  padding: 0 4px 0 5px;
  background: #2b2b2f;
  border-right: 1px solid #1c74ac;
  border-bottom: 2px solid #1c6490;
`;

const DomTitle = styled(TitleBar)`
  margin: 0 -4px 0 -5px;
  padding-left: 2px;
  border-bottom: 0;
`;

const DomTools = styled.div`
  display: grid;
  grid-template-columns: 62fr 82fr 17fr 37fr 117fr 40fr 45fr 28fr 42fr 41fr 55fr 62fr 74fr;
  flex: none;
  height: 23px;
  margin-top: 5px;
  font-size: 12px;
`;

const field = css`
  display: flex;
  align-items: center;
  background: #2a2a2e;
  border: 1px solid #3c3c42;
`;

const SelectBox = styled.label`
  ${field}
  min-width: 0;
  padding-right: 4px;
  select {
    flex: 1;
    min-width: 0;
    height: 100%;
    padding: 0 0 0 2px;
    border: 0;
    background: none;
    appearance: none;
    font-size: ${(p) => p.$size}px;
  }
`;

const SpinBox = styled.label`
  ${field}
  min-width: 0;
  padding-right: 5px;
  gap: 4px;
  input {
    flex: 1;
    min-width: 0;
    width: 0;
    border: 0;
    background: none;
    text-align: right;
  }
`;

const Flat = styled.button`
  display: flex;
  align-items: center;
  justify-content: center;
  min-width: 0;
  padding: 0;
  overflow: hidden;
  white-space: nowrap;
  background: ${(p) => (p.$dark ? '#29292c' : '#3e3e46')};
  border: 1px solid #4c4c54;
  color: ${(p) => p.$color || (p.$dim ? '#77777c' : '#eee')};
  grid-column: span ${(p) => p.$span || 1};
`;

function Select({ label, value, size = 12 }) {
  return (
    <SelectBox $size={size}>
      <select aria-label={label} defaultValue={value}>
        <option>{value}</option>
      </select>
      <Caret size={8} color="#888" />
    </SelectBox>
  );
}

function Spin({ label, value }) {
  return (
    <SpinBox>
      <input aria-label={label} defaultValue={value} />
      <svg width="6" height="14" viewBox="0 0 6 14" aria-hidden="true">
        <path d="M0 5l3-4 3 4zM0 9l3 4 3-4z" fill="#eee" />
      </svg>
    </SpinBox>
  );
}

const Ladder = styled.div`
  position: relative;
  flex: none;
  height: 719px;
  overflow: hidden;
`;

const LadderTable = styled.table`
  width: 100%;
  table-layout: fixed;
  height: ${(p) => p.$h || 18}px;
  text-align: center;
  line-height: 14px;
`;

const HeadCell = styled.th`
  height: 19px;
  background: ${(p) => p.$bg || '#ececec'};
  color: ${(p) => p.$fg};
  border: 1px solid #a8b0b8;
  font-weight: 500;
  font-size: 9px;
`;

const Cell = styled.td`
  background-color: ${(p) => p.$bg};
  background-image: linear-gradient(
    ${(p) => (p.$right ? 'to left' : 'to right')},
    var(--bar, transparent) var(--fill, 0%),
    transparent 0
  );
  color: ${(p) => p.$fg || '#111'};
  font-size: ${(p) => p.$size || 11}px;
  border-bottom: 1px solid #708298;
  border-right: 1px solid #80808c;
  text-align: ${(p) => p.$align || 'center'};
  box-shadow: inset ${(p) => p.$strip || '0 0 0 transparent'};
`;

const Foot = styled.div`
  position: absolute;
  left: 0;
  right: 0;
  bottom: 0;
`;

const FootCell = styled.td`
  height: 17px;
  background: ${(p) => p.$bg || 'transparent'};
  color: ${(p) => (p.$bg === '#000' ? '#f0a8b0' : '#111')};
  border-right: ${(p) => (p.$bg ? '1px solid #999' : '0')};
`;

const WIDTHS = [38, 47, 28, 46, 39, 38, 39, 39, 46, 28, 43, 39, 55, 62, 77, 38];

const HEADS = [
  ['Notes', '#f01010'], ['Bid price', '#f01010'], ['Limits', '#500'], ['ICEBERG', '#f01010'],
  ['Bid', '#500', '#dc143c'], ['Bid MKT', '#f01010'], ['Ask MK', '#1010f0'], ['Ask', '#fff', '#00f'],
  ['ICEBERG', '#1010f0'], ['Limits', '#000080'], ['Ask price', '#1010f0'], ['TODAY', '#600'],
  ['Last Day vol', '#111'], ['Last Week vol', '#111'], ['Contract vol', '#111'], ['Orders', '#f01010'],
];

// price, bid, bid market, ask market, ask, today, last day, last week, contract
const LADDER = [
  ['2029,25', '', 40, 197, 120, 6037, 20308, 21140, 64595],
  ['2029,00', '', 125, 2, 148, 5187, 25479, 25620, 77226],
  ['2028,75', '', 64, 30, 167, 3019, 31651, 30125, 80984],
  ['2028,50', '', 71, 78, 215, 1324, 38731, 34170, 86923],
  ['2028,25', '', 65, 14, 386, 607, 47372, 31743, 94303],
  ['2028,00', '', 258, '', 450, 722, 54568, 40385, 106796],
  ['2027,75', '', '', 77, 226, 435, 41082, 36702, 91526],
  ['2027,50', '', 70, 20, 217, 871, 42745, 50854, 105645],
  ['2027,25', '', 61, '', 231, 694, 30379, 40004, 76759],
  ['2027,00', '', 134, '', 223, 570, 33446, 24782, 66563],
  ['2026,75', '', 54, 77, 229, 454, 28280, 27170, 65006],
  ['2026,50', '', 111, '', 250, 799, 31664, 32414, 77707],
  ['2026,25', '', 40, '', 200, 1373, 22990, 20480, 51890],
  ['2026,00', '', 240, '', 196, 2250, 18562, 18490, 44542],
  ['2025,75', '', 36, '', 176, 3527, 15958, 22784, 49980],
  ['2025,50', '', 8, '', 177, 3908, 7563, 30363, 51059],
  ['2025,25', '', 10, '', 160, 2545, 7819, 25327, 48571],
  ['2025,00', '', 32, 120, 161, 1163, 12162, 26626, 62959],
  ['2024,75', '', 176, 6, 143, 2422, 11652, 27066, 71119],
  ['2024,50', '', 234, '', 164, 5980, 12823, 24276, 79647],
  ['2024,25', '', 144, 4, 201, 6060, 9500, 14084, 66923],
  ['2024,00', '', 145, 16, 18, 5465, 6881, 7219, 48173],
  ['2023,75', 136, 10, 175, '', 2834, 7452, 7972, 37723],
  ['2023,50', 156, 34, 148, '', 1171, 7011, 11035, 42329],
  ['2023,25', 103, 107, '', '', 107, 2161, 16673, 41081],
  ['2023,00', 222, '', '', '', '', 749, 20655, 49763],
  ['2022,75', 225, '', '', '', '', 2180, 16781, 32062],
  ['2022,50', 344, '', '', '', '', 1625, 16617, 30390],
  ['2022,25', 218, '', '', '', '', 814, 14577, 27819],
  ['2022,00', 468, '', '', '', '', 36, 10020, 24887],
  ['2021,75', 184, '', '', '', '', '', 3875, 18171],
  ['2021,50', 189, '', '', '', '', '', 8324, 26804],
  ['2021,25', 168, '', '', '', '', '', 15381, 40250],
  ['2021,00', 340, '', '', '', '', '', 25099, 46750],
  ['2020,75', '', '', '', '', '', '', 32561, 49345],
  ['2020,50', '', '', '', '', '', '', 25050, 44271],
  ['2020,25', '', '', '', '', '', '', 29572, 55941],
  ['2020,00', '', '', '', '', '', '', 43233, 77206],
  ['2019,75', '', '', '', '', '', '', 31349, 58866],
  ['', '', '', '', '', '', '', 30036, 53265],
];

const BEST_ASK = 21;
const BEST_BID = 22;

const bar = (color, pct) => ({ '--bar': color, '--fill': `${pct}%` });

function LadderCols() {
  return (
    <colgroup>
      {WIDTHS.map((w, i) => <col key={i} style={{ width: `${(w / 702) * 100}%` }} />)}
    </colgroup>
  );
}

function LadderRow({ row, i }) {
  const [price, bid, bidMkt, askMkt, ask, today, day, week, contract] = row;
  const near = i < 25;
  const isAsk = i === BEST_ASK;
  const isBid = i === BEST_BID;
  const limit = isBid ? '0' : i === 26 ? '-20' : '';
  const hasBidBar = i >= BEST_BID && i < 32;
  const dayColor = i === 5 ? '#0000f8' : i < 12 ? '#5c0606' : '#f00';
  return (
    <tr>
      <Cell $bg="#e4e4e4" />
      <Cell
        $bg={isBid ? '#ff0' : near ? '#6c2c3e' : '#dcb0b0'}
        $fg={near && !isBid ? '#1c060c' : '#221818'}
        $size={isBid ? 9 : 11}
      >
        {isBid ? '(5)2023,75' : price}
      </Cell>
      <Cell $bg={limit ? '#bc707c' : '#b98c92'}>{limit}</Cell>
      <Cell $bg={isBid ? '#0f0' : '#de9470'} />
      <Cell
        $bg={isBid ? '#ff0' : '#d4583c'}
        $fg={hasBidBar && !isBid ? '#3c0404' : '#111'}
        $right
        style={hasBidBar ? bar('#7c0000', (bid / 468) * 98) : undefined}
      >
        {bid}
      </Cell>
      <Cell $bg={isAsk ? '#ffb634' : isBid ? '#ffae00' : '#e4e4e4'}>{bidMkt}</Cell>
      <Cell $bg={isAsk ? '#ffb634' : '#e4e4e4'}>{askMkt}</Cell>
      <Cell $bg={isAsk ? '#ff0' : '#00bfff'} $fg="#053040" style={i > 11 && i < 21 ? bar('#007474', ask / 5) : undefined}>
        {ask}
      </Cell>
      <Cell $bg={isAsk ? '#0ff' : '#2f8a86'} />
      <Cell $bg={isAsk ? '#40b8f8' : '#92b4f4'}>{isAsk ? '-23' : ''}</Cell>
      <Cell
        $bg={isBid ? '#ff0' : near ? '#0c6c9c' : '#98b8f0'}
        $fg={isBid ? '#111' : near ? '#02186c' : '#0a2490'}
        $size={isBid ? 9 : 11}
      >
        {isBid ? '(5)2023,7' : price}
      </Cell>
      <Cell $bg="#6e605e" $align="right" $right style={today ? bar(i < 3 ? '#00f800' : '#008c8c', (today / 6060) * 38) : undefined}>
        {today}
      </Cell>
      <Cell
        $bg="#5c4a50"
        $fg="#98e020"
        $strip={i < 22 ? '3px 0 0 #0000b8' : undefined}
        style={bar(dayColor, (day / 54568) * 98)}
      >
        {day}
      </Cell>
      <Cell $bg="#544648" $fg="#ecec20" style={bar(i < 10 ? '#4a240c' : '#56702c', (week / 50854) * 38)}>{week}</Cell>
      <Cell
        $bg="#6e585c"
        $fg="#dca430"
        $strip={i > 21 ? '3px 0 0 #f00' : undefined}
        style={bar('#26221c', (contract / 106796) * 59)}
      >
        {contract}
      </Cell>
      <Cell $bg="#e4e4e4" />
    </tr>
  );
}

const FOOT = ['X', 'PnL', 'X', 'X', 'MKT', 'X', 'X', 'MKT', 'X', 'X', 'PnL', '', '', '', '', 'X'];

const OrderPanel = styled.div`
  display: flex;
  flex: 1;
  gap: 2px;
  padding: 2px 0 6px;
  font-size: 10px;
`;

const OrderButtons = styled.div`
  display: grid;
  grid-template-columns: 38fr 55fr 55fr 50fr 75fr 37fr 48fr 56fr 40fr;
  grid-template-rows: 26px 24px;
  gap: 1px;
  flex: 455 1 0;
  min-width: 0;
`;

const OrderForm = styled.div`
  display: grid;
  grid-template-columns: 26fr 53fr 26fr 54fr;
  grid-template-rows: 23px 23px;
  gap: 5px 2px;
  align-items: stretch;
  flex: 168 1 0;
  min-width: 0;
  padding-left: 20px;
  font-size: 11px;
  ${SelectBox} {
    grid-column: span 3;
  }
`;

const FieldName = styled.span`
  align-self: center;
  white-space: nowrap;
`;

const SendButton = styled(Flat)`
  flex: 58 1 0;
  height: 51px;
  font-size: 11px;
`;

function SmartDom() {
  return (
    <DomWindow>
      <DomTitle $line="#1c74ac">
        <Logo active />
        <Title>Smart DOM [ESM6]</Title>
        <Spacer />
        <WindowControls />
      </DomTitle>
      <DomTools>
        <Select label="Time in force" value="GTC" />
        <Select label="Strategy" value="#1 SL&TP|Pos=" size={9} />
        <Flat $dark $color="#1c9cd8" aria-label="Settings"><Icon name="gear" /></Flat>
        <Flat $color="#2464a0" aria-label="Sync"><Icon name="sync" /></Flat>
        <Select label="Account" value="DEMOAT486 USD" />
        {[1, 2, 3, 5, 10, 50].map((n) => <Flat key={n}>{n}</Flat>)}
        <Spin label="Quantity" value="1" />
        <Flat $color="#1c9cd8" aria-label="Options"><Icon name="wrench" /></Flat>
      </DomTools>
      <Ladder>
        <LadderTable $h={721}>
          <LadderCols />
          <thead>
            <tr>
              {HEADS.map(([name, fg, bg], i) => <HeadCell key={i} $fg={fg} $bg={bg}>{name}</HeadCell>)}
            </tr>
          </thead>
          <tbody>
            {LADDER.map((row, i) => <LadderRow key={i} row={row} i={i} />)}
          </tbody>
        </LadderTable>
        <Foot>
          <LadderTable>
            <LadderCols />
            <tbody>
              <tr>
                {FOOT.map((t, i) => (
                  <FootCell key={i} $bg={t === 'PnL' ? '#000' : t && '#f2f2f2'}>{t}</FootCell>
                ))}
              </tr>
            </tbody>
          </LadderTable>
        </Foot>
      </Ladder>
      <OrderPanel>
        <OrderButtons>
          <Flat $dark $color="#999" aria-label="Lock"><Icon name="lock" /></Flat>
          <Flat>BUY BID</Flat>
          <Flat>SELL BID</Flat>
          <Flat>BUY MKT</Flat>
          <Flat $dark $dim>PnL</Flat>
          <Flat>SELL MK</Flat>
          <Flat>SELL ASK</Flat>
          <Flat>BUY ASK</Flat>
          <Flat $dark>OCO</Flat>
          <Flat $span={2}>C</Flat>
          <Flat $dark $dim $span={2}>Flat</Flat>
          <Flat $dark $dim>Entry</Flat>
          <Flat>Flatten</Flat>
          <Flat>Reverse</Flat>
          <Flat $span={2}>Cancel all</Flat>
        </OrderButtons>
        <OrderForm>
          <FieldName>Type:</FieldName>
          <Select label="Type" value="Buy Limit" size={11} />
          <FieldName>Limit:</FieldName>
          <Spin label="Limit" value="0" />
          <FieldName>Stop:</FieldName>
          <Spin label="Stop" value="0" />
        </OrderForm>
        <SendButton>Send Order</SendButton>
      </OrderPanel>
    </DomWindow>
  );
}

/* ---------- bid/ask steps ---------- */

const Bottom = styled.div`
  display: grid;
  grid-template-columns: minmax(0, 426fr) minmax(0, 284fr);
  flex: 1;
  min-height: 0;
  overflow: hidden;
`;

const LEVELS = [
  ['733', '2027,25', 2], ['633', '2027,00', 2], ['545', '2026,75', 2], ['801', '2026,50', 3], ['1401', '2026,25', 6],
  ['2250', '2026,00', 10], ['3730', '2025,75', 17], ['4100', '2025,50', 18], ['2812', '2025,25', 13], ['1309', '2025,00', 6],
  ['2680', '2024,75', 12], ['6673', '2024,50', 30], ['6472', '2024,25', 29], ['5909', '2024,00', 27], ['3124', '2023,75', 14],
  ['1177', '2023,50', 5],
];

const BOOK = [
  [4, 23, '200'], [5, 22, '196'], [6, 20, '176'], [7, 20, '177'], [8, 18, '16'], [9, 18, '16'], [10, 16, '14'],
  [11, 18, '16'], [12, 23, '202'], [13, 1, ''],
];

// column, level, size, side, height in levels, volume bar
const STEPS = [
  [0, 8, '86', 'a', 1, 8], [1, 7, '48', 'b', 1, 3], [2, 6, '50', 'a', 1, 4], [3, 7, '41', 'a', 1, 3], [4, 7, '41', 'a', 1, 3],
  [5, 8, '56', 'a', 1, 4], [6, 8, '67', 'a', 2, 6], [7, 8, '43', 'b', 1, 3], [8, 9, '53', 'b', 1, 4], [9, 9, '690', 'a', 5, 37],
  [10, 11, '50', 'b', 1, 4], [11, 12, '44', 'b', 1, 3], [12, 12, '44', 'b', 1, 3], [13, 11, '119', 'b', 1, 10],
  [14, 11, '110', 'a', 1, 10], [15, 11, '110', 'a', 1, 10],
];

const levelY = (i) => Math.round(827 + i * 18.7);
const stepX = (i) => Math.round(1078 + i * 19.4);

function StepChart() {
  return (
    <Plot $h={317} viewBox="1058 835 426 317" preserveAspectRatio="xMinYMin slice">
      <rect x="1058" y="864" width="426" height="18" fill="#1e1e1e" />
      {LEVELS.map(([, p, w], i) => (
        <rect key={p} x="1058" y={levelY(i)} width={w} height="18" fill="#0c6c0c" />
      ))}
      <rect x="1058" y="835" width="20" height="290" fill="#fff" opacity=".13" />
      {STEPS.map(([c, lv, size, side, h, vol]) => (
        <g key={c}>
          <rect x={stepX(c)} y={1125 - vol} width="20" height={vol} fill={side === 'a' ? '#006868' : '#600404'} />
          <rect
            x={stepX(c)}
            y={levelY(lv)}
            width="19"
            height={levelY(lv + h) - levelY(lv)}
            fill={side === 'a' ? '#0ff' : '#f00'}
            stroke="#b0b0b0"
          />
          <Label x={stepX(c) + 10} y={levelY(lv) + 13} textAnchor="middle" fill={side === 'a' ? '#022' : '#500'}>
            {size}
          </Label>
        </g>
      ))}
      <rect x="1070" y="977" width="8" height="17" fill="#0ff" opacity=".7" />
      {BOOK.map(([lv, w, v]) => (
        <g key={lv}>
          <rect x={1441 - w} y={levelY(lv)} width={w} height="18" fill="#0000f0" />
          <Label x="1439" y={levelY(lv) + 13} textAnchor="end" fill="#fff" $size={11}>{v}</Label>
        </g>
      ))}
      <rect x="1426" y="1089" width="15" height="17" fill="#f00" />
      <rect x="1424" y="1107" width="17" height="18" fill="#f00" />
      <rect x="1430" y="1127" width="11" height="16" fill="#f00" />
      <rect x="1416" y="1146" width="25" height="5" fill="#f00" />
      <Label x="1439" y="1120" textAnchor="end" fill="#fff" $size={11}>15</Label>
      <rect x="1441" y="1089" width="43" height="17" fill="#808080" />
      {LEVELS.map(([v, p], i) => (
        <g key={p}>
          <Label x="1059" y={levelY(i) + 13} fill="#e8e8e8">{v}</Label>
          <Label x="1443" y={levelY(i) + 14} fill="#ddd">{p}</Label>
        </g>
      ))}
      <path d="M1441.500 835V1125M1058 1125.500H1441M1058 1150.500H1484" stroke="#ccc" />
      <Label x="1057" y="1141" fill="#ddd">016 16:27:47</Label>
    </Plot>
  );
}

/* ---------- all price ---------- */

const PricePanel = styled.section`
  display: flex;
  flex-direction: column;
  min-width: 0;
  margin-top: -12px;
  background: #242426;
  border-left: 2px solid #3a3a3c;
`;

const PriceForm = styled.form`
  display: grid;
  grid-template-columns: 39fr 105fr 55fr 68fr;
  align-items: center;
  height: 30px;
  margin: 2px 0;
  padding-left: 9px;
  white-space: nowrap;
  ${SelectBox} {
    height: 29px;
    margin-right: 8px;
  }
`;

const PlainInput = styled.input`
  width: 100%;
  min-width: 0;
  height: 29px;
  background: #2e2e32;
  border: 1px solid #48484e;
`;

const PriceArea = styled.div`
  display: flex;
`;

const PriceTable = styled.table`
  flex: 1;
  table-layout: fixed;
  width: 0;
  height: 256px;
  font-size: 12px;
  th {
    height: 22px;
    background: #2e2e32;
    text-align: center;
  }
  td {
    text-align: left;
  }
  td:first-child {
    padding-left: 15px;
  }
`;

const PriceCell = styled.td`
  color: ${(p) => p.$fg || '#f4f4f4'};
`;

const ScrollRail = styled.div`
  display: flex;
  flex-direction: column;
  width: 8px;
  gap: 2px;
`;

const RailEnd = styled.button`
  height: 19px;
  padding: 0;
  border: 1px solid #888;
  border-radius: 3px;
  background: #222;
`;

const RailThumb = styled.div`
  height: 38px;
  background: #8c8c8c;
`;

const Brand = styled.a`
  color: ${(p) => (p.$dim ? '#909090' : '#ddd')};
  font-size: 11px;
  line-height: 14px;
  text-decoration: none;
`;

const BrandLine = styled.div`
  display: flex;
  justify-content: flex-end;
`;

const PRICES = [
  ['2045,00', 1914, 568, 1017, 885], ['2044,00', 1204, 283, 522, 682], ['2045,50', 1006, 379, 472, 526],
  ['2044,50', 966, 340, 663, 299], ['2045,75', 953, 309, 490, 463], ['2045,25', 888, 305, 444, 444],
  ['2046,00', 757, 277, 478, 278], ['2046,25', 727, 293, 452, 275], ['2046,50', 707, 187, 241, 466],
  ['2042,00', 666, 333, 272, 394],
];

function priceColor(row, i, j) {
  if (i === 0 && (j === 1 || j === 2)) return '#f06848';
  if (j === 3 && row[3] < row[4]) return '#808080';
  if (j === 4 && row[4] < row[3]) return '#808080';
  return undefined;
}

function AllPrice() {
  return (
    <PricePanel>
      <TitleBar>
        <Logo />
        <Title>All Price ESM6</Title>
        <Spacer />
        <WindowControls />
      </TitleBar>
      <PriceForm>
        <span>Период</span>
        <Select label="Период" value="Current Day" />
        <label htmlFor="scale">Price Scale</label>
        <PlainInput id="scale" />
      </PriceForm>
      <PriceArea>
        <PriceTable>
          <colgroup>
            <col width="27%" />
            <col width="20%" />
            <col width="20%" />
            <col width="20%" />
            <col width="13%" />
          </colgroup>
          <thead>
            <tr>
              {['Цена', 'Объем', 'Трейды', 'Биды', 'Аски'].map((h) => <th key={h}>{h}</th>)}
            </tr>
          </thead>
          <tbody>
            {PRICES.map((row, i) => (
              <tr key={row[0]}>
                {row.map((v, j) => <PriceCell key={j} $fg={priceColor(row, i, j)}>{v}</PriceCell>)}
              </tr>
            ))}
          </tbody>
        </PriceTable>
        <ScrollRail>
          <RailEnd aria-label="Up" />
          <RailThumb />
          <Spacer />
          <RailEnd aria-label="Down" />
        </ScrollRail>
      </PriceArea>
      <BrandLine>
        <Brand href="#net">OrderFlowTrading.Net</Brand>
      </BrandLine>
    </PricePanel>
  );
}

/* ---------- tapes ---------- */

const TapeWindow = styled.section`
  display: flex;
  flex-direction: column;
  flex: ${(p) => (p.$grow ? 1 : 'none')};
  min-height: 0;
  height: ${(p) => (p.$h ? `${p.$h}px` : 'auto')};
  background: #242426;
  border-left: 2px solid #38383a;
  border-bottom: 1px solid #4a4a4e;
  overflow: hidden;
`;

const TapeBody = styled.div`
  display: flex;
  flex: 1;
  align-items: flex-start;
  min-height: 0;
  padding-right: ${(p) => p.$pad || 4}px;
  background: ${(p) => p.$bg || 'transparent'};
`;

const TapeTable = styled.table`
  flex: 1;
  width: 0;
  table-layout: fixed;
  height: ${(p) => p.$h}px;
  font-size: ${(p) => p.$size || 10}px;
  text-align: center;
  line-height: 14px;
  th {
    height: 23px;
    background: #3c3c42;
    border-right: 1px solid #4c4c52;
    font-size: 11px;
  }
`;

const TapeRow = styled.tr`
  color: ${(p) => p.$fg};
  background: ${(p) => p.$bg || 'transparent'};
`;

const Rail = styled.div`
  display: flex;
  flex-direction: column;
  align-items: center;
  align-self: stretch;
  width: 12px;
  padding: 14px 0 12px;
  gap: 13px;
  background: #36363a;
`;

const Thumb = styled.div`
  width: 7px;
  height: 12px;
  background: #8c8c90;
`;

const CyanStrip = styled.div`
  align-self: stretch;
  width: 13px;
  margin-top: ${(p) => p.$top || 0}px;
  background: ${(p) => (p.$mark ? 'linear-gradient(165deg, #00bfff 96%, #d02040 0)' : '#00bfff')};
`;

const TapeFoot = styled.footer`
  display: flex;
  align-items: center;
  justify-content: space-between;
  flex: none;
  height: ${(p) => p.$h}px;
  padding-right: 5px;
  background: ${(p) => p.$bg};
`;

const Freeze = styled.button`
  width: ${(p) => p.$w}px;
  height: ${(p) => p.$h}px;
  padding: 0;
  background: #3e3e46;
  border: 1px solid #55555c;
  font-size: ${(p) => p.$size || 11}px;
`;

const C = '#28ece0';
const R = '#e01c1c';
const W = '#f4f4f4';

const SPREAD = [
  ['16:36:15', '2023,75', 10, 0, 0, '2024,25', -3654, C],
  ['16:36:15', '2024,00', 5, 0, 0, '2024,25', -3644, C],
  ['16:36:15', '2023,75', 0, 0, 3, '2024,00', -3639, R],
  ['16:36:15', '2024,00', 10, 0, 0, '2024,25', -3642, C],
  ['16:36:15', '2023,75', 0, 0, 5, '2024,00', -3632, R],
  ['16:36:15', '2024,00', 47, 0, 0, '2024,25', -3637, C],
  ['16:36:15', '2023,75', 0, 0, 3, '2024,00', -3590, R],
  ['16:36:15', '2024,00', 10, 0, 0, '2024,25', -3593, C],
  ['16:36:15', '2023,75', 0, 0, 5, '2024,00', -3583, R],
  ['16:36:10', '2024,00', 73, 0, 2, '2024,25', -3588, C],
  ['16:36:10', '2024,25', 60, 0, 0, '2024,50', -3517, C],
  ['16:36:10', '2024,00', 0, 0, 2, '2024,25', -3457, R],
  ['16:36:10', '2024,25', 84, 0, 0, '2024,50', -3459, C],
  ['16:35:54', '2024,50', 234, 0, 6, '2024,75', -3375, C],
  ['16:35:54', '2024,50', 0, 0, 119, '2024,50', -3147, R],
  ['16:35:41', '2024,25', 5, 0, 30, '2024,50', -3266, R],
  ['16:35:41', '2024,00', 0, 1, 0, '2024,50', -3291, W],
  ['16:35:41', '2024,00', 0, 0, 9, '2024,25', -3291, R],
  ['16:35:41', '2024,25', 4, 0, 0, '2024,50', -3300, C],
  ['16:35:41', '2024,25', 0, 0, 7, '2024,25', -3296, R],
  ['16:35:41', '2024,00', 0, 0, 2, '2024,25', -3303, R],
  ['16:35:41', '2024,25', 4, 0, 0, '2024,50', -3305, C],
  ['16:35:21', '2024,00', 8, 0, 96, '2024,25', -3301, R],
  ['16:35:18', '2024,25', 2, 0, 0, '2024,50', -3389, C],
  ['16:35:16', '2024,00', 0, 0, 6, '2024,25', -3387, R],
  ['16:35:16', '2024,25', 12, 0, 0, '2024,50', -3393, C],
  ['16:35:15', '2024,00', 0, 0, 16, '2024,25', -3381, R],
  ['16:35:13', '2024,25', 13, 0, 0, '2024,50', -3397, C],
  ['16:35:10', '2024,00', 0, 0, 46, '2024,25', -3384, R],
  ['16:35:05', '2024,25', 2, 0, 0, '2024,50', -3430, C],
  ['16:35:05', '2024,00', 0, 0, 20, '2024,25', -3428, R],
];

const BIG = [
  ['15:29:09', '2026,00', '---', 277, '2026,00', '2026,25', '272 x 26', '#38a8e0', '#151515'],
  ['15:16:45', '2028,75', '--', 286, '2028,00', '2029,00', '210 x 78', '#48a8f0', '#191970'],
  ['15:16:31', '2028,75', '---', 450, '2028,25', '2029,00', '28 x 86', '#48a8f0', '#191970'],
  ['14:55:02', '2031,00', '-', 200, '2030,75', '2031,25', '124 x 13', '#d02848', '#151515'],
  ['14:55:02', '2031,00', '-', 200, '2030,75', '2031,25', '124 x 13', '#d02848', '#000'],
  ['13:58:06', '2031,25', '--', 200, '2031,00', '2031,50', '111 x 4', '#30a8f0', '#191970'],
];

const TAPE_HEADS = ['Время', 'Цена', '+/-', 'Объ.', 'Биды', 'Аски', 'Разме'];

function Cols({ widths }) {
  const total = widths.reduce((a, b) => a + b, 0);
  return (
    <colgroup>
      {widths.map((w, i) => <col key={i} style={{ width: `${(w / total) * 100}%` }} />)}
    </colgroup>
  );
}

function SpreadTape() {
  return (
    <TapeWindow $h={656}>
      <TitleBar>
        <Logo />
        <Title>Spread Tape ESM6</Title>
        <Spacer />
        <ToolButton aria-label="Tools"><Icon name="tools" /></ToolButton>
        <WindowControls />
      </TitleBar>
      <TapeBody $bg="#000">
        <TapeTable $h={602} $size={11}>
          <Cols widths={[49, 45, 24, 23, 24, 46, 49]} />
          <thead>
            <tr>
              {['Время', 'Биды', '', '', '', 'Аски', 'Дельта'].map((h, i) => <th key={i}>{h}</th>)}
            </tr>
          </thead>
          <tbody>
            {SPREAD.map((row, i) => (
              <TapeRow key={i} $fg={row[7]}>
                {row.slice(0, 7).map((v, j) => <td key={j}>{v}</td>)}
              </TapeRow>
            ))}
          </tbody>
        </TapeTable>
        <Rail>
          <svg width="8" height="7" viewBox="0 0 8 7" aria-hidden="true"><path d="M0 7h8l-4-7z" fill="#8c8c90" /></svg>
          <Thumb />
          <Spacer />
          <Caret size={8} color="#8c8c90" />
        </Rail>
      </TapeBody>
      <TapeFoot $h={23} $bg="#000">
        <Freeze $w={52} $h={23}>Freeze</Freeze>
        <Brand href="#net" $dim>OrderFlowTrading.Net</Brand>
      </TapeFoot>
    </TapeWindow>
  );
}

function BigTape() {
  return (
    <TapeWindow $h={173}>
      <TapeBody>
        <TapeTable $h={112}>
          <Cols widths={[43, 38, 20, 30, 48, 43, 39]} />
          <tbody>
            {BIG.map((row, i) => (
              <TapeRow key={i} $fg={row[7]} $bg={row[8]}>
                {row.slice(0, 7).map((v, j) => <td key={j}>{v}</td>)}
              </TapeRow>
            ))}
          </tbody>
        </TapeTable>
        <CyanStrip />
      </TapeBody>
    </TapeWindow>
  );
}

function SmartTape({ rows, height, foot }) {
  return (
    <TapeWindow $h={height} $grow={!height}>
      <TitleBar>
        <Logo />
        <Title>ESM6 Smart Tape</Title>
        <Spacer />
        <WindowControls />
      </TitleBar>
      <TapeBody $pad={6}>
        <TapeTable $h={rows ? 42 : 23}>
          <Cols widths={[47, 45, 25, 31, 45, 40, 38]} />
          <thead>
            <tr>
              {TAPE_HEADS.map((h) => <th key={h}>{h}</th>)}
            </tr>
          </thead>
          {rows && (
            <tbody>
              <TapeRow $fg="#38b0f8" $bg="#191970">
                {rows.map((v, i) => <td key={i}>{v}</td>)}
              </TapeRow>
            </tbody>
          )}
        </TapeTable>
        <CyanStrip $top={23} $mark={foot} />
      </TapeBody>
      {foot && (
        <TapeFoot $h={31} $bg="#303036">
          <Freeze $w={58} $h={25} $size={12}>Freeze</Freeze>
          <Brand href="#net">OrderFlowTrading.Net</Brand>
        </TapeFoot>
      )}
    </TapeWindow>
  );
}

export default function App() {
  return (
    <>
      <GlobalStyle />
      <Desktop>
        <Column>
          <Charts>
            <ClusterChart />
            <HourChart />
            <MinuteChart />
          </Charts>
          <TabRow>
            <TabWindow>
              <TabTitle>
                <WindowControls pin="pinUp" dimMax />
              </TabTitle>
              <Tabs>
                {TABS.map((t) => <Tab key={t}>{t}</Tab>)}
              </Tabs>
            </TabWindow>
            <HScroll>
              <HScrollTrack>
                <svg width="20" height="12" viewBox="0 0 20 12" aria-hidden="true">
                  <path d="M0 1h6v10h-6zM14 0l6 6-6 6z" fill="#98989c" />
                </svg>
              </HScrollTrack>
            </HScroll>
          </TabRow>
          <Note>
            {'"NAVIGATOR"  -  (Ellwave algosystem) created by Powerful Traders.\n/ATAS trading terminal/29.03.2016'}
          </Note>
        </Column>
        <Column>
          <SmartDom />
          <Bottom>
            <StepChart />
            <AllPrice />
          </Bottom>
        </Column>
        <Column>
          <SpreadTape />
          <BigTape />
          <SmartTape rows={['16:33:10', '2025,00', '----', '690', '2024,00', '2025,25', '9']} height={158} />
          <SmartTape foot />
        </Column>
      </Desktop>
    </>
  );
}
